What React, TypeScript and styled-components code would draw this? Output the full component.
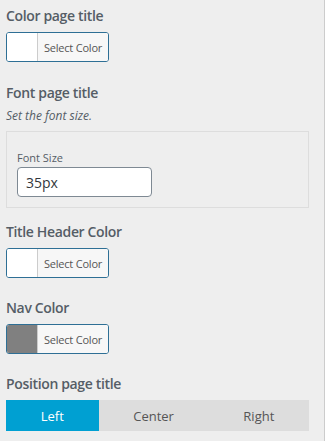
import React from "react";
import styled, { createGlobalStyle } from "styled-components";

const GlobalStyle = createGlobalStyle`
  html, body {
    margin: 0;
    padding: 0;
    background: #eeeeee;
  }
  body {
    font-family: "Open Sans", "Noto Sans", sans-serif;
  }
`;

const Panel = styled.div`
  box-sizing: border-box;
  width: 325px;
  min-height: 441px;
  padding: 6px 15px 0 6px;
  border-right: 1px solid #cccccc;
  background: #eeeeee;
`;

const Section = styled.div<{ $space?: number }>`
  margin-bottom: ${(p) => (p.$space ?? 21)}px;
`;

const Heading = styled.div`
  font-size: 14px;
  line-height: 20px;
  font-weight: 600;
  letter-spacing: -0.35px;
  color: #555d66;
  margin-bottom: 6px;
`;

const Description = styled.div`
  font-size: 12px;
  line-height: 18px;
  font-style: italic;
  color: #555d66;
  margin: -2px 0 6px;
`;

const ColorButton = styled.button`
  box-sizing: border-box;
  display: flex;
  align-items: stretch;
  width: 103px;
  height: 30px;
  padding: 0;
  border: 1px solid #2e6f95;
  border-radius: 3px;
  background: #ffffff;
  overflow: hidden;
  cursor: pointer;
`;

const Swatch = styled.span<{ $color: string }>`
  width: 30px;
  flex: none;
  background: ${(p) => p.$color};
`;

const ColorLabel = styled.span`
  flex: 1;
  display: flex;
  align-items: center;
  justify-content: center;
  border-left: 1px solid #cccccc;
  background: #f7f7f7;
  font-family: "Open Sans", "Noto Sans", sans-serif;
  font-size: 11px;
  color: #555555;
  letter-spacing: -0.2px;
`;

const FieldBox = styled.div`
  border: 1px solid #dddddd;
  padding: 18px 10px 10px;
`;

const FieldLabel = styled.div`
  font-size: 11px;
  line-height: 16px;
  color: #555d66;
  margin-bottom: 1px;
`;

const TextInput = styled.input`
  box-sizing: border-box;
  width: 135px;
  height: 30px;
  padding: 0 8px;
  border: 1px solid #7e8993;
  border-radius: 4px;
  background: #ffffff;
  font-family: "Open Sans", "Noto Sans", sans-serif;
  font-size: 14px;
  color: #32373c;
  outline: none;
`;

const Segmented = styled.div`
  display: flex;
  height: 31px;
  background: #dddddd;
`;

const Segment = styled.button<{ $active?: boolean }>`
  flex: 1 1 auto;
  border: none;
  padding: 0;
  margin: 0;
  background: ${(p) => (p.$active ? "#00a0d2" : "#dddddd")};
  color: ${(p) => (p.$active ? "#ffffff" : "#555555")};
  font-family: "Open Sans", "Noto Sans", sans-serif;
  font-size: 13px;
  cursor: pointer;
`;

const ColorControl: React.FC<{ title: string; color: string; space?: number }> = ({
  title,
  color,
  space,
}) => (
  <Section $space={space}>
    <Heading>{title}</Heading>
    <ColorButton type="button">
      <Swatch $color={color} />
      <ColorLabel>Select Color</ColorLabel>
    </ColorButton>
  </Section>
);

export default function App() {
  return (
    <>
      <GlobalStyle />
      <Panel>
        <ColorControl title="Color page title" color="#ffffff" />

        <Section $space={14}>
          <Heading>Font page title</Heading>
          <Description>Set the font size.</Description>
          <FieldBox>
            <FieldLabel>Font Size</FieldLabel>
            <TextInput defaultValue="35px" />
          </FieldBox>
        </Section>

        <ColorControl title="Title Header Color" color="#ffffff" space={20} />
        <ColorControl title="Nav Color" color="#808080" space={20} />

        <Section $space={0}>
          <Heading>Position page title</Heading>
          <Segmented>
            <Segment $active>Left</Segment>
            <Segment>Center</Segment>
            <Segment>Right</Segment>
          </Segmented>
        </Section>
      </Panel>
    </>
  );
}
